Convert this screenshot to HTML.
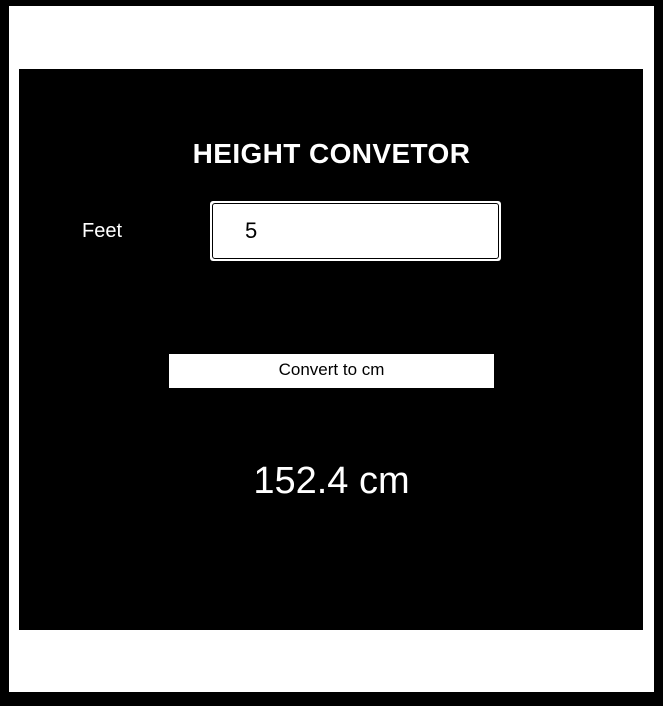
<!DOCTYPE html>
<html><head><style>
body{margin:0;width:663px;height:706px;background:#000;position:relative;overflow:hidden;font-family:"Liberation Sans",sans-serif}
.w{position:absolute;left:9px;top:6px;width:645px;height:686px;background:#fff}
.p{position:absolute;left:19px;top:69px;width:624px;height:561px;background:#000}
.t{position:absolute;left:0;width:663px;text-align:center;color:#fff}
</style></head><body>
<div class="w"></div>
<div class="p"></div>
<div class="t" style="top:138px;font-size:28px;font-weight:bold;letter-spacing:0.4px">HEIGHT CONVETOR</div>
<div style="position:absolute;left:82px;top:220px;color:#fff;font-size:20px">Feet</div>
<div style="position:absolute;left:210px;top:201px;width:291px;height:60px;background:#fff;border-radius:3px"></div>
<div style="position:absolute;left:212px;top:203px;width:285px;height:54px;border:1px solid #000;border-radius:3px;background:#fff"></div>
<div style="position:absolute;left:245px;top:218px;font-size:22px;color:#000">5</div>
<div style="position:absolute;left:169px;top:354px;width:325px;height:34px;background:#fff;text-align:center;line-height:32px;font-size:17px;color:#000">Convert to cm</div>
<div class="t" style="top:460px;font-size:38px">152.4 cm</div>
</body></html>
